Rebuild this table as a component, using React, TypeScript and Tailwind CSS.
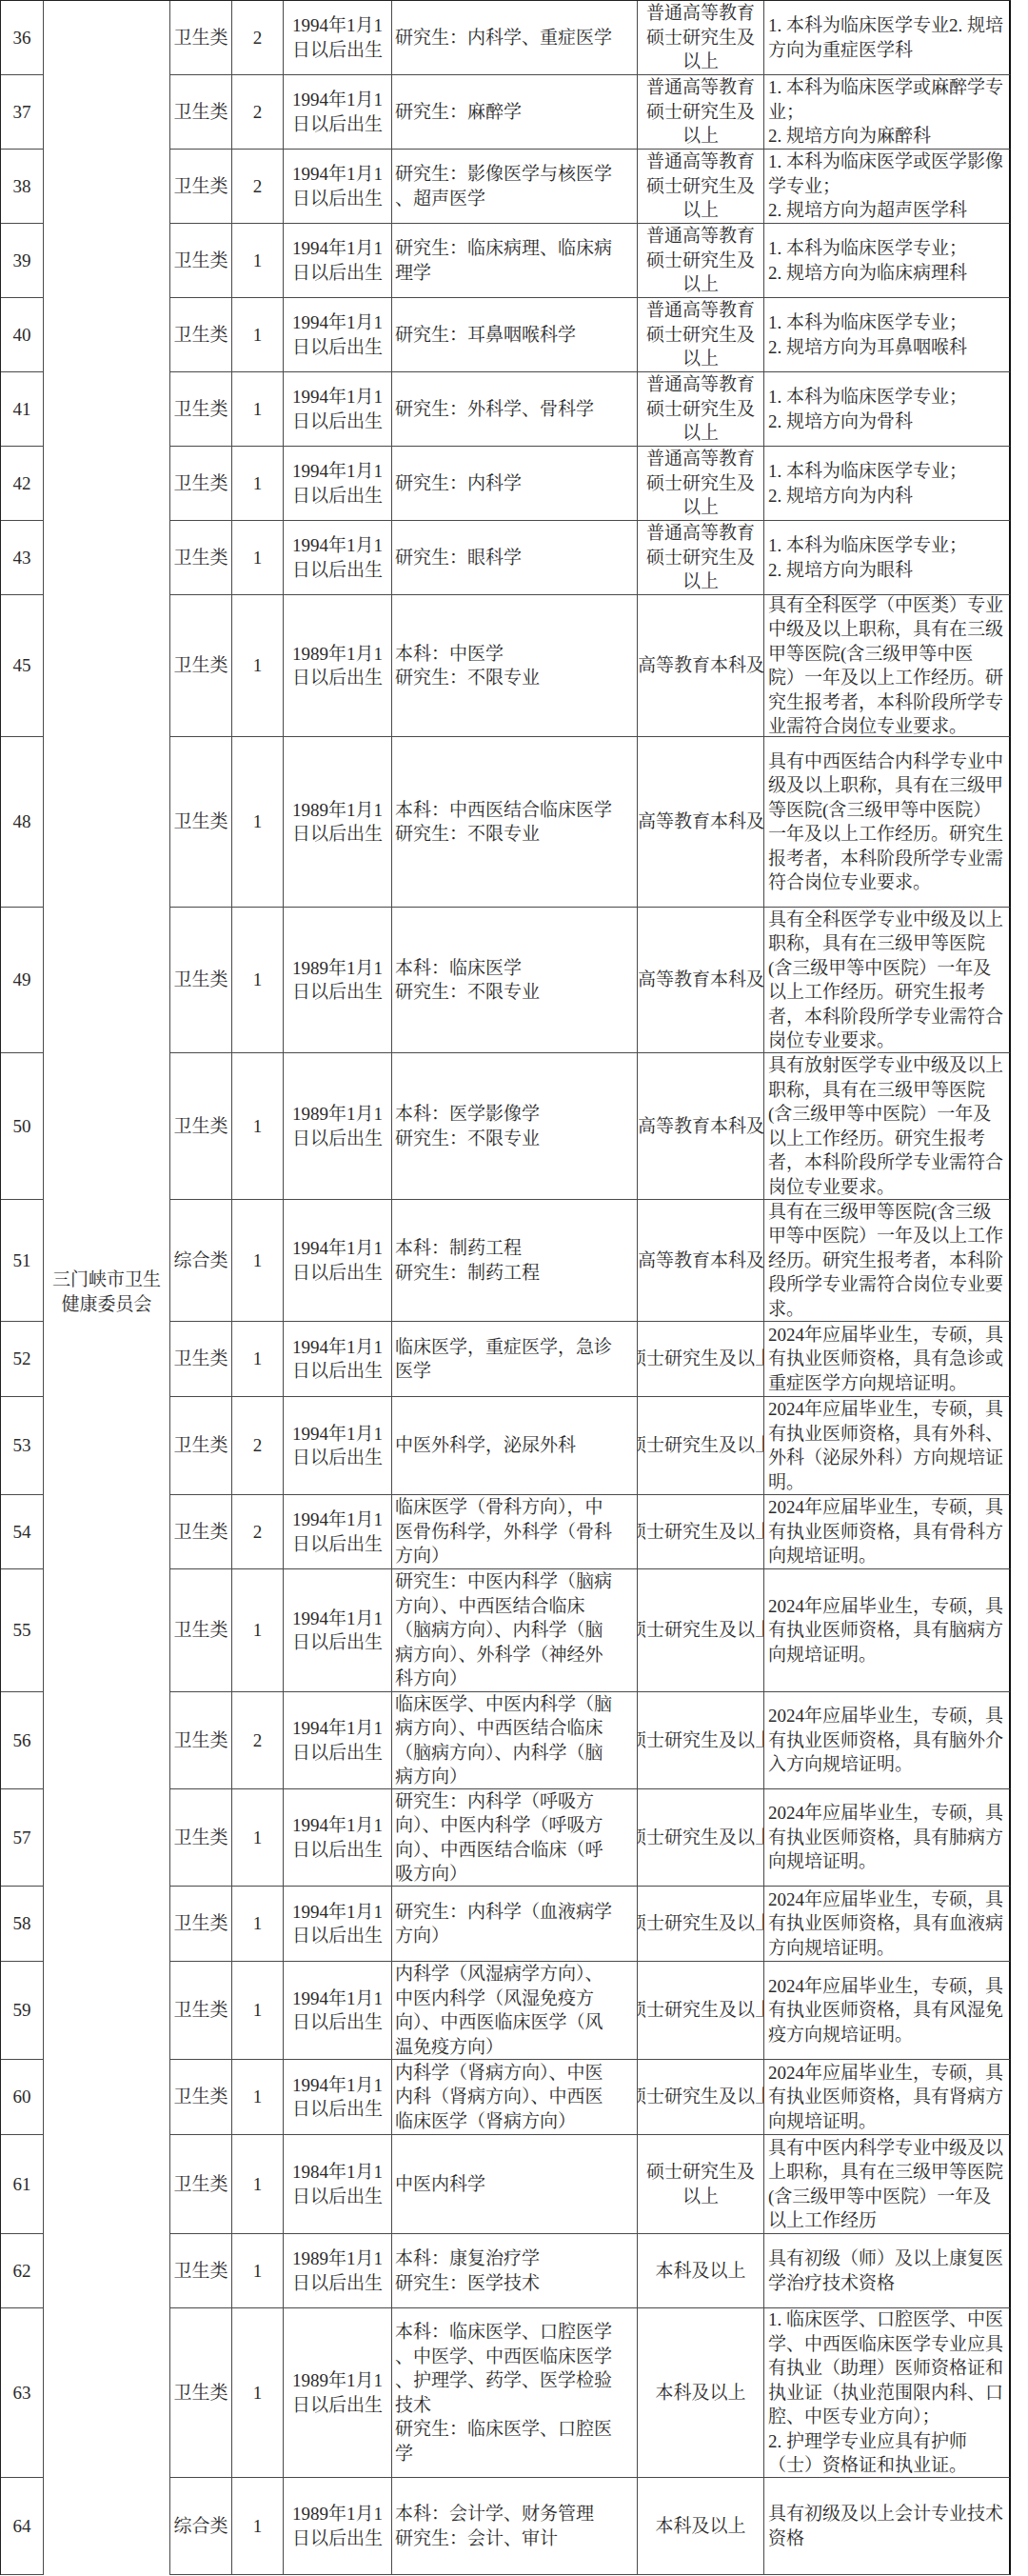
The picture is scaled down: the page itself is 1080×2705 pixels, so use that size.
import React from "react";

type Row = {
  n: string;
  cat: string;
  cnt: string;
  date: string[];
  major: string[];
  edu: "pt" | "gd" | "ss" | "ss2" | "bk";
  req: string[];
};

const D94 = ["1994年1月1", "日以后出生"];
const D89 = ["1989年1月1", "日以后出生"];
const D84 = ["1984年1月1", "日以后出生"];

const rows: Row[] = [
  { n: "36", cat: "卫生类", cnt: "2", date: D94, major: ["研究生：内科学、重症医学"], edu: "pt", req: ["1. 本科为临床医学专业2. 规培", "方向为重症医学科"] },
  { n: "37", cat: "卫生类", cnt: "2", date: D94, major: ["研究生：麻醉学"], edu: "pt", req: ["1. 本科为临床医学或麻醉学专", "业；", "2. 规培方向为麻醉科"] },
  { n: "38", cat: "卫生类", cnt: "2", date: D94, major: ["研究生：影像医学与核医学", "、超声医学"], edu: "pt", req: ["1. 本科为临床医学或医学影像", "学专业；", "2. 规培方向为超声医学科"] },
  { n: "39", cat: "卫生类", cnt: "1", date: D94, major: ["研究生：临床病理、临床病", "理学"], edu: "pt", req: ["1. 本科为临床医学专业；", "2. 规培方向为临床病理科"] },
  { n: "40", cat: "卫生类", cnt: "1", date: D94, major: ["研究生：耳鼻咽喉科学"], edu: "pt", req: ["1. 本科为临床医学专业；", "2. 规培方向为耳鼻咽喉科"] },
  { n: "41", cat: "卫生类", cnt: "1", date: D94, major: ["研究生：外科学、骨科学"], edu: "pt", req: ["1. 本科为临床医学专业；", "2. 规培方向为骨科"] },
  { n: "42", cat: "卫生类", cnt: "1", date: D94, major: ["研究生：内科学"], edu: "pt", req: ["1. 本科为临床医学专业；", "2. 规培方向为内科"] },
  { n: "43", cat: "卫生类", cnt: "1", date: D94, major: ["研究生：眼科学"], edu: "pt", req: ["1. 本科为临床医学专业；", "2. 规培方向为眼科"] },
  { n: "45", cat: "卫生类", cnt: "1", date: D89, major: ["本科：中医学", "研究生：不限专业"], edu: "gd", req: ["具有全科医学（中医类）专业", "中级及以上职称，具有在三级", "甲等医院(含三级甲等中医", "院）一年及以上工作经历。研", "究生报考者，本科阶段所学专", "业需符合岗位专业要求。"] },
  { n: "48", cat: "卫生类", cnt: "1", date: D89, major: ["本科：中西医结合临床医学", "研究生：不限专业"], edu: "gd", req: ["具有中西医结合内科学专业中", "级及以上职称，具有在三级甲", "等医院(含三级甲等中医院）", "一年及以上工作经历。研究生", "报考者，本科阶段所学专业需", "符合岗位专业要求。"] },
  { n: "49", cat: "卫生类", cnt: "1", date: D89, major: ["本科：临床医学", "研究生：不限专业"], edu: "gd", req: ["具有全科医学专业中级及以上", "职称，具有在三级甲等医院", "(含三级甲等中医院）一年及", "以上工作经历。研究生报考", "者，本科阶段所学专业需符合", "岗位专业要求。"] },
  { n: "50", cat: "卫生类", cnt: "1", date: D89, major: ["本科：医学影像学", "研究生：不限专业"], edu: "gd", req: ["具有放射医学专业中级及以上", "职称，具有在三级甲等医院", "(含三级甲等中医院）一年及", "以上工作经历。研究生报考", "者，本科阶段所学专业需符合", "岗位专业要求。"] },
  { n: "51", cat: "综合类", cnt: "1", date: D94, major: ["本科：制药工程", "研究生：制药工程"], edu: "gd", req: ["具有在三级甲等医院(含三级", "甲等中医院）一年及以上工作", "经历。研究生报考者，本科阶", "段所学专业需符合岗位专业要", "求。"] },
  { n: "52", cat: "卫生类", cnt: "1", date: D94, major: ["临床医学，重症医学，急诊", "医学"], edu: "ss", req: ["2024年应届毕业生，专硕，具", "有执业医师资格，具有急诊或", "重症医学方向规培证明。"] },
  { n: "53", cat: "卫生类", cnt: "2", date: D94, major: ["中医外科学，泌尿外科"], edu: "ss", req: ["2024年应届毕业生，专硕，具", "有执业医师资格，具有外科、", "外科（泌尿外科）方向规培证", "明。"] },
  { n: "54", cat: "卫生类", cnt: "2", date: D94, major: ["临床医学（骨科方向），中", "医骨伤科学，外科学（骨科", "方向）"], edu: "ss", req: ["2024年应届毕业生，专硕，具", "有执业医师资格，具有骨科方", "向规培证明。"] },
  { n: "55", cat: "卫生类", cnt: "1", date: D94, major: ["研究生：中医内科学（脑病", "方向）、中西医结合临床", "（脑病方向）、内科学（脑", "病方向）、外科学（神经外", "科方向）"], edu: "ss", req: ["2024年应届毕业生，专硕，具", "有执业医师资格，具有脑病方", "向规培证明。"] },
  { n: "56", cat: "卫生类", cnt: "2", date: D94, major: ["临床医学、中医内科学（脑", "病方向）、中西医结合临床", "（脑病方向）、内科学（脑", "病方向）"], edu: "ss", req: ["2024年应届毕业生，专硕，具", "有执业医师资格，具有脑外介", "入方向规培证明。"] },
  { n: "57", cat: "卫生类", cnt: "1", date: D94, major: ["研究生：内科学（呼吸方", "向）、中医内科学（呼吸方", "向）、中西医结合临床（呼", "吸方向）"], edu: "ss", req: ["2024年应届毕业生，专硕，具", "有执业医师资格，具有肺病方", "向规培证明。"] },
  { n: "58", cat: "卫生类", cnt: "1", date: D94, major: ["研究生：内科学（血液病学", "方向）"], edu: "ss", req: ["2024年应届毕业生，专硕，具", "有执业医师资格，具有血液病", "方向规培证明。"] },
  { n: "59", cat: "卫生类", cnt: "1", date: D94, major: ["内科学（风湿病学方向）、", "中医内科学（风湿免疫方", "向）、中西医临床医学（风", "温免疫方向）"], edu: "ss", req: ["2024年应届毕业生，专硕，具", "有执业医师资格，具有风湿免", "疫方向规培证明。"] },
  { n: "60", cat: "卫生类", cnt: "1", date: D94, major: ["内科学（肾病方向）、中医", "内科（肾病方向）、中西医", "临床医学（肾病方向）"], edu: "ss", req: ["2024年应届毕业生，专硕，具", "有执业医师资格，具有肾病方", "向规培证明。"] },
  { n: "61", cat: "卫生类", cnt: "1", date: D84, major: ["中医内科学"], edu: "ss2", req: ["具有中医内科学专业中级及以", "上职称，具有在三级甲等医院", "(含三级甲等中医院）一年及", "以上工作经历"] },
  { n: "62", cat: "卫生类", cnt: "1", date: D89, major: ["本科：康复治疗学", "研究生：医学技术"], edu: "bk", req: ["具有初级（师）及以上康复医", "学治疗技术资格"] },
  { n: "63", cat: "卫生类", cnt: "1", date: D89, major: ["本科：临床医学、口腔医学", "、中医学、中西医临床医学", "、护理学、药学、医学检验", "技术", "研究生：临床医学、口腔医", "学"], edu: "bk", req: ["1. 临床医学、口腔医学、中医", "学、中西医临床医学专业应具", "有执业（助理）医师资格证和", "执业证（执业范围限内科、口", "腔、中医专业方向）；", "2. 护理学专业应具有护师", "（士）资格证和执业证。"] },
  { n: "64", cat: "综合类", cnt: "1", date: D89, major: ["本科：会计学、财务管理", "研究生：会计、审计"], edu: "bk", req: ["具有初级及以上会计专业技术", "资格"] },
];

const base = "border-r border-b border-[#4a4a4a] overflow-hidden flex";

function Edu({ kind }: { kind: Row["edu"] }) {
  if (kind === "gd") {
    return (
      <div className={`${base} items-center justify-start`}>
        <div className="whitespace-nowrap shrink-0">高等教育本科及以上</div>
      </div>
    );
  }
  if (kind === "ss") {
    return (
      <div className={`${base} items-center justify-center`}>
        <div className="whitespace-nowrap shrink-0">硕士研究生及以上</div>
      </div>
    );
  }
  const lines =
    kind === "pt" ? ["普通高等教育", "硕士研究生及", "以上"] : kind === "ss2" ? ["硕士研究生及", "以上"] : ["本科及以上"];
  return (
    <div className={`${base} flex-col items-center justify-center`}>
      {lines.map((l, i) => (
        <div key={i} className="whitespace-nowrap">
          {l}
        </div>
      ))}
    </div>
  );
}

export default function App() {
  return (
    <div className="bg-white w-[1080px] min-h-[2705px] text-[#2a2a2a]">
      <div
        className="grid w-fit border-l border-t border-[#222] grid-cols-[45px_133px_65px_54px_114px_258px_133px_259px] grid-rows-[78px_78px_78px_78px_78px_78px_78px_78px_149px_179px_153px_154px_128px_79px_103px_78px_129px_102px_102px_79px_103px_79px_104px_78px_178px_102px] text-[19px] leading-[25.5px]"
        style={{ fontFamily: '"Liberation Serif", "Noto Serif CJK SC", "Noto Sans CJK SC", serif' }}
      >
        <div className="col-start-2 row-span-full border-r border-[#4a4a4a] flex flex-col items-center justify-center pt-[8px]">
          <div className="whitespace-nowrap">三门峡市卫生</div>
          <div className="whitespace-nowrap">健康委员会</div>
        </div>
        {rows.map((r) => (
          <React.Fragment key={r.n}>
            <div className={`${base} items-center justify-center`}>{r.n}</div>
            <div className={`${base} items-center justify-center`}>
              <span className="whitespace-nowrap">{r.cat}</span>
            </div>
            <div className={`${base} items-center justify-center`}>{r.cnt}</div>
            <div className={`${base} flex-col items-center justify-center`}>
              {r.date.map((l, i) => (
                <div key={i} className="whitespace-nowrap">
                  {l}
                </div>
              ))}
            </div>
            <div className={`${base} flex-col justify-center pl-[3px]`}>
              {r.major.map((l, i) => (
                <div key={i} className="whitespace-nowrap">
                  {l}
                </div>
              ))}
            </div>
            <Edu kind={r.edu} />
            <div className="border-r-2 border-b border-r-[#111] border-b-[#4a4a4a] overflow-hidden flex flex-col justify-center pl-[4px]">
              {r.req.map((l, i) => (
                <div key={i} className="whitespace-nowrap">
                  {l}
                </div>
              ))}
            </div>
          </React.Fragment>
        ))}
      </div>
    </div>
  );
}
